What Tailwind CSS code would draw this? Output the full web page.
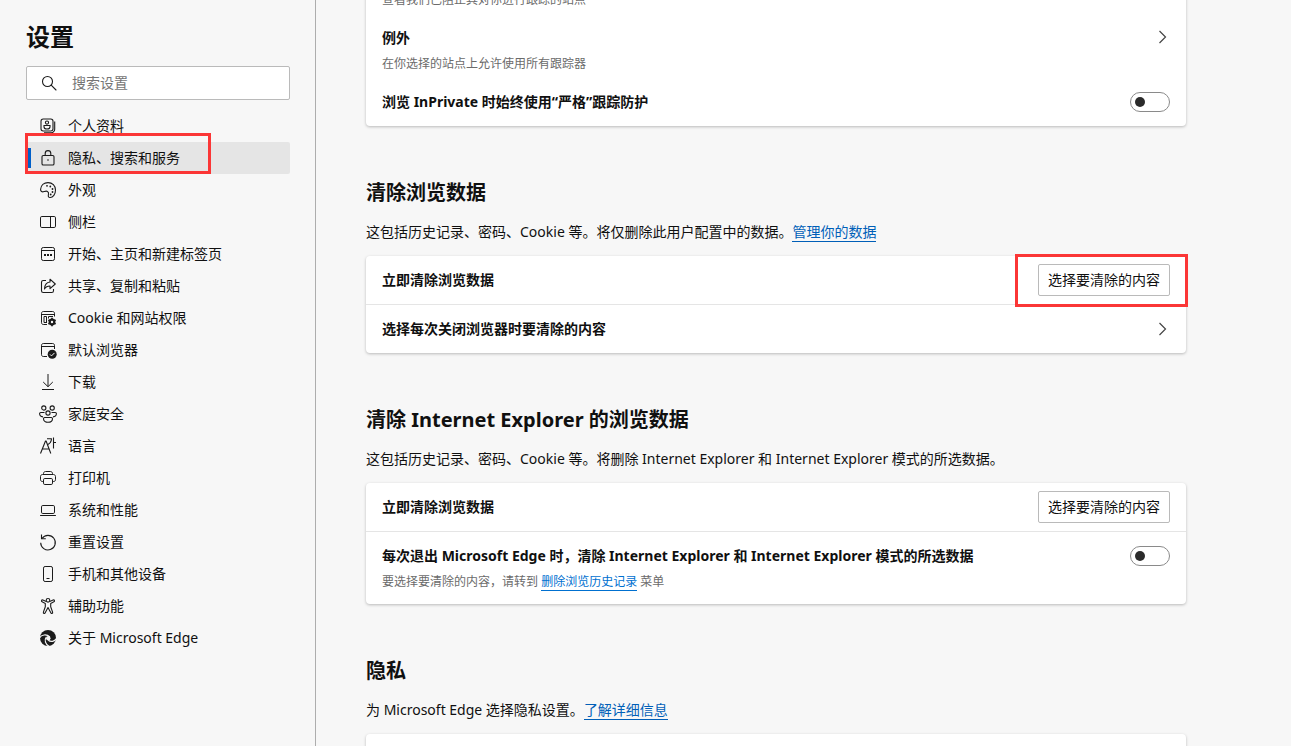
<!DOCTYPE html>
<html lang="zh-CN">
<head>
<meta charset="utf-8">
<meta name="viewport" content="width=device-width, initial-scale=1">
<title>设置</title>
<script src="https://cdn.jsdelivr.net/npm/@tailwindcss/browser@4"></script>
</head>
<body class="flex h-screen overflow-hidden bg-[#f7f7f7] font-['Noto_Sans','Noto_Sans_CJK_SC',sans-serif] text-sm leading-5 text-[#101010]">

<aside class="w-[316px] shrink-0 border-r border-[#adadad] pt-5 pr-[25px] pl-[26px]">
  <h1 class="text-2xl leading-[34px] font-bold">设置</h1>
  <label class="mt-3 flex h-[34px] items-center rounded-xs border border-[#bababa] bg-white pl-3.5">
    <svg class="size-4 shrink-0" viewBox="0 0 16 16" fill="none" stroke="#1b1b1b" stroke-width="1.1" stroke-linecap="round"><circle cx="6.5" cy="6.5" r="5"/><path d="M10.2 10.2 15 15"/></svg>
    <input type="text" aria-label="搜索设置" placeholder="搜索设置" class="ml-[15px] w-full min-w-0 bg-transparent outline-none placeholder:text-[#757575]">
  </label>

  <nav class="mt-2.5">
    <ul class="[&_a]:flex [&_a]:h-8 [&_a]:items-center [&_a]:gap-3 [&_a]:pl-3.5 [&_svg]:size-4 [&_svg]:shrink-0 [&_svg]:overflow-visible">
      <li><a href="#">
        <svg viewBox="0 0 16 16" fill="none" stroke="#1b1b1b" stroke-width="1.1"><rect x="1" y="1" width="12" height="12" rx="2.2"/><path d="M14.7 3.5v7.7a3.5 3.5 0 0 1-3.500 3.500H4"/><circle cx="7" cy="4.600" r="1.600"/><path d="M4 7.500h6v1.200C10 10.200 8.800 11 7 11s-3-.8-3-2.300z"/></svg>
        个人资料</a></li>
      <li class="relative">
        <a href="#" aria-current="page" class="rounded-xs bg-[#e5e5e5]">
        <svg viewBox="0 0 16 16" fill="none" stroke="#1b1b1b" stroke-width="1.1"><rect x="2" y="5.500" width="12" height="9.500" rx="1.300"/><path d="M5.200 5.500V3.400a2.800 2.800 0 0 1 5.600 0v2.100"/><circle cx="8" cy="10" r=".8" fill="#1b1b1b" stroke="none"/></svg>
        隐私、搜索和服务</a>
        <span class="absolute top-1.5 left-0.5 h-5 w-[3px] bg-[#005fc8]"></span>
        <span class="pointer-events-none absolute -top-[9px] -left-px h-[41px] w-[186px] border-3 border-[#fb3636]"></span>
      </li>
      <li><a href="#">
        <svg viewBox="0 0 16 16" fill="none" stroke="#1b1b1b" stroke-width="1.1"><path d="M.6 7.3C.9 3.300 4 .6 8 .6c4.300 0 7.500 3.200 7.500 7.400 0 4.200-2.600 7.500-5.300 7.500-1.800 0-2.200-1.200-1.800-2.700.4-1.600.2-2.800-.9-3.400-1.200-.7-2.300-.2-3.500.2C2.200 10.200.4 9.600.6 7.300z"/><g fill="#1b1b1b" stroke="none"><circle cx="7" cy="3.800" r=".9"/><circle cx="10.300" cy="4.500" r=".9"/><circle cx="12.500" cy="7" r=".9"/><circle cx="12.500" cy="10" r=".9"/><circle cx="10.700" cy="12.500" r=".9"/></g></svg>
        外观</a></li>
      <li><a href="#">
        <svg viewBox="0 0 16 16" fill="none" stroke="#1b1b1b"><rect x=".5" y="2.500" width="15" height="11" rx="1.300"/><path d="M10.500 2.500v11"/></svg>
        侧栏</a></li>
      <li><a href="#">
        <svg viewBox="0 0 16 16" fill="none" stroke="#1b1b1b"><rect x="1.500" y="1.500" width="13" height="13" rx="1.800"/><path d="M1.500 4.500h13"/><path d="M4 9h2m1 0h2m1 0h2" stroke-width="2"/></svg>
        开始、主页和新建标签页</a></li>
      <li><a href="#">
        <svg viewBox="0 0 16 16" fill="none" stroke="#1b1b1b" stroke-width="1.1" stroke-linejoin="round"><path d="M6 2.500H3.300c-1 0-1.800.8-1.800 1.800v8.400c0 1 .8 1.800 1.800 1.800h8.400c1 0 1.800-.8 1.800-1.800V11"/><path d="M10 1.200 15.300 6 10 10.700V8C7.500 8 5.700 8.800 4.500 11c.1-3.800 2-6.600 5.500-7z"/></svg>
        共享、复制和粘贴</a></li>
      <li><a href="#">
        <svg viewBox="0 0 16 16" fill="none" stroke="#1b1b1b"><path d="M14.500 6.500V3.300c0-1-.8-1.800-1.800-1.800H3.300c-1 0-1.800.8-1.800 1.800v9.400c0 1 .8 1.800 1.800 1.800H7M1.500 4.500h13"/><path d="M7 12.500H4v-6h2.500v6M8.500 8.500v-2H13"/><circle cx="12" cy="12" r="2.300" stroke-width="2.200"/><path d="M12 7.800v2m0 4.400v2M8.400 9.900l1.700 1m3.800 2.200 1.700 1M8.400 14.100l1.700-1m3.800-2.200 1.700-1" stroke-width="1.700"/></svg>
        Cookie 和网站权限</a></li>
      <li><a href="#">
        <svg viewBox="0 0 16 16" fill="none" stroke="#1b1b1b"><path d="M14.500 7V3.300c0-1-.8-1.800-1.800-1.800H3.300c-1 0-1.800.8-1.800 1.800v9.400c0 1 .8 1.800 1.800 1.800H7M1.500 4.500h13"/><circle cx="12.200" cy="12.200" r="4.500" fill="#1b1b1b" stroke="none"/><path d="m10 12.400 1.500 1.500 3-3" stroke="#f7f7f7"/></svg>
        默认浏览器</a></li>
      <li><a href="#">
        <svg viewBox="0 0 16 16" fill="none" stroke="#1b1b1b"><path d="M8 0v12.500M3.200 8l4.800 4.700L12.800 8"/><path d="M2 15.500h12"/></svg>
        下载</a></li>
      <li><a href="#">
        <svg viewBox="0 0 16 16" fill="none" stroke="#1b1b1b" stroke-width="1.1"><circle cx="3.800" cy="2" r="2.100"/><circle cx="12.200" cy="2" r="2.100"/><circle cx="8" cy="7" r="2.100"/><path d="M4.500 6.500H.8c-.8 0-1.200.4-1.200 1.100C-.4 9.500 1 10.800 3 10.900M11.500 6.500h3.700c.8 0 1.200.4 1.200 1.100 0 1.900-1.400 3.200-3.400 3.300"/><path d="M4.700 11.500h6.600c.7 0 1.200.5 1.200 1.200 0 2-1.900 3.600-4.500 3.600s-4.500-1.600-4.500-3.600c0-.7.500-1.200 1.200-1.200z"/></svg>
        家庭安全</a></li>
      <li><a href="#">
        <svg viewBox="0 0 16 16" fill="none" stroke="#1b1b1b" stroke-width="1.1" stroke-linejoin="round"><path d="M.5 15.500 5.500 3h.6l4.700 12.500M2.300 11h6.800"/><path d="M7 .8h4.500c-.2 3-1.500 4.900-4 5.900M13.500-.5v11M13.500 4.500H16"/></svg>
        语言</a></li>
      <li><a href="#">
        <svg viewBox="0 0 16 16" fill="none" stroke="#1b1b1b"><path d="M3.500 4.500v-1c0-1.100.9-2 2-2h5c1.100 0 2 .9 2 2v1M3.500 11.500H2.300C1.300 11.500.5 10.700.5 9.700V6.500c0-1.100.9-2 2-2h11c1.100 0 2 .9 2 2v3.200c0 1-.8 1.800-1.800 1.800h-1.200"/><rect x="3.500" y="8.500" width="9" height="6" rx="1.300"/></svg>
        打印机</a></li>
      <li><a href="#">
        <svg viewBox="0 0 16 16" fill="none" stroke="#1b1b1b"><rect x="1.500" y="3.500" width="13" height="8" rx="1.300"/><path d="M.5 13.500h15" stroke-linecap="round"/></svg>
        系统和性能</a></li>
      <li><a href="#">
        <svg viewBox="0 0 16 16" fill="none" stroke="#1b1b1b" stroke-width="1.1"><path d="M2 4.500A7.300 7.300 0 1 1 .7 8.700"/><path d="M1.500.5v4.300h4.300"/></svg>
        重置设置</a></li>
      <li><a href="#">
        <svg viewBox="0 0 16 16" fill="none" stroke="#1b1b1b"><rect x="3.500" y=".5" width="9" height="15" rx="1.600"/><path d="M6.500 12.500h3"/></svg>
        手机和其他设备</a></li>
      <li><a href="#">
        <svg viewBox="0 0 16 16" fill="none" stroke="#1b1b1b" stroke-width="1.1" stroke-linejoin="round"><circle cx="8" cy="2.300" r="1.800"/><path d="M6.300 3.500 2.900 2c-1.300-.5-2 1.200-.8 1.800l3.200 1.600v3.400l-1.900 5.300c-.4 1.300 1.300 1.900 1.800.7L8 9.500l2.800 5.300c.5 1.200 2.200.6 1.800-.7l-1.900-5.300V5.400l3.200-1.600c1.200-.6.500-2.300-.8-1.800L9.700 3.500"/></svg>
        辅助功能</a></li>
      <li><a href="#">
        <svg viewBox="0 0 16 16" fill="none"><circle cx="8" cy="8" r="8" fill="#1b1b1b"/><circle cx="8.300" cy="8.300" r="2.200" fill="#f7f7f7"/><g stroke="#f7f7f7" stroke-width="1.200"><path d="M-.5 8C1.300 4.700 6.500 3.600 9.800 7"/><path d="M6.300 7.200c-2.300 2.800-.8 7.300 2.700 9.200"/><path d="M8.300 10.300c2.500 1.900 6.200 1.300 8.200-1.600"/></g></svg>
        关于 Microsoft Edge</a></li>
    </ul>
  </nav>
</aside>

<main class="min-w-0 flex-1 overflow-hidden px-[50px]">
  <div class="max-w-[820px]">

    <section class="-mt-[50px] rounded-sm bg-white shadow-[0_1px_3px_rgba(0,0,0,0.25)]">
      <div class="flex h-16 flex-col justify-end px-4 pb-1.5">
        <p class="text-xs leading-4 text-[#6b6b6b]">查看我们已阻止其对你进行跟踪的站点</p>
      </div>
      <a href="#" class="flex h-16 justify-between px-4 pt-3.5">
        <span>
          <span class="block font-bold">例外</span>
          <span class="mt-2 block text-xs leading-4 text-[#6b6b6b]">在你选择的站点上允许使用所有跟踪器</span>
        </span>
        <svg class="mt-px size-4" viewBox="0 0 16 16" fill="none" stroke="#444" stroke-width="1.200"><path d="m5.500 2 6 6-6 6"/></svg>
      </a>
      <div class="flex h-12 items-center justify-between px-4">
        <label for="strict" class="font-bold">浏览 InPrivate 时始终使用“严格”跟踪防护</label>
        <input id="strict" type="checkbox" role="switch" class="flex h-5 w-10 appearance-none items-center rounded-full border border-[#8a8a8a] bg-white px-1 before:size-2.5 before:rounded-full before:bg-[#2b2b2b] checked:justify-end">
      </div>
    </section>

    <h2 class="mt-[52px] text-xl leading-[30px] font-bold">清除浏览数据</h2>
    <p class="mt-3.5">这包括历史记录、密码、Cookie 等。将仅删除此用户配置中的数据。<a href="#" class="border-b border-[#005fb8] text-[#005fb8]">管理你的数据</a></p>
    <section class="mt-3.5 rounded-sm bg-white shadow-[0_1px_3px_rgba(0,0,0,0.25)]">
      <div class="flex h-[49px] items-center justify-between border-b border-[#e5e5e5] px-4">
        <h3 class="font-bold">立即清除浏览数据</h3>
        <div class="relative">
          <button type="button" class="block h-8 w-[132px] rounded-xs border border-[#bababa] bg-white">选择要清除的内容</button>
          <span class="pointer-events-none absolute -top-2.5 -left-[23px] h-[53px] w-[173px] border-3 border-[#fb3636]"></span>
        </div>
      </div>
      <a href="#" class="flex h-12 items-center justify-between px-4">
        <span class="font-bold">选择每次关闭浏览器时要清除的内容</span>
        <svg class="size-4" viewBox="0 0 16 16" fill="none" stroke="#444" stroke-width="1.200"><path d="m5.500 2 6 6-6 6"/></svg>
      </a>
    </section>

    <h2 class="mt-[52px] text-xl leading-[30px] font-bold">清除 Internet Explorer 的浏览数据</h2>
    <p class="mt-3.5">这包括历史记录、密码、Cookie 等。将删除 Internet Explorer 和 Internet Explorer 模式的所选数据。</p>
    <section class="mt-3.5 rounded-sm bg-white shadow-[0_1px_3px_rgba(0,0,0,0.25)]">
      <div class="flex h-[49px] items-center justify-between border-b border-[#e5e5e5] px-4">
        <h3 class="font-bold">立即清除浏览数据</h3>
        <button type="button" class="h-8 w-[132px] rounded-xs border border-[#bababa] bg-white">选择要清除的内容</button>
      </div>
      <div class="flex h-[72px] justify-between px-4 pt-3.5">
        <div>
          <label for="ie-exit" class="block font-bold">每次退出 Microsoft Edge 时，清除 Internet Explorer 和 Internet Explorer 模式的所选数据</label>
          <p class="mt-2 text-xs leading-4 text-[#6b6b6b]">要选择要清除的内容，请转到 <a href="#" class="border-b border-[#0070d0] text-[#0070d0]">删除浏览历史记录</a> 菜单</p>
        </div>
        <input id="ie-exit" type="checkbox" role="switch" class="flex h-5 w-10 shrink-0 appearance-none items-center rounded-full border border-[#8a8a8a] bg-white px-1 before:size-2.5 before:rounded-full before:bg-[#2b2b2b] checked:justify-end">
      </div>
    </section>

    <h2 class="mt-[52px] text-xl leading-[30px] font-bold">隐私</h2>
    <p class="mt-3.5">为 Microsoft Edge 选择隐私设置。<a href="#" class="border-b border-[#005fb8] text-[#005fb8]">了解详细信息</a></p>
    <section class="mt-3.5 h-16 rounded-sm bg-white shadow-[0_1px_3px_rgba(0,0,0,0.25)]"></section>
  </div>
</main>
</body>
</html>
